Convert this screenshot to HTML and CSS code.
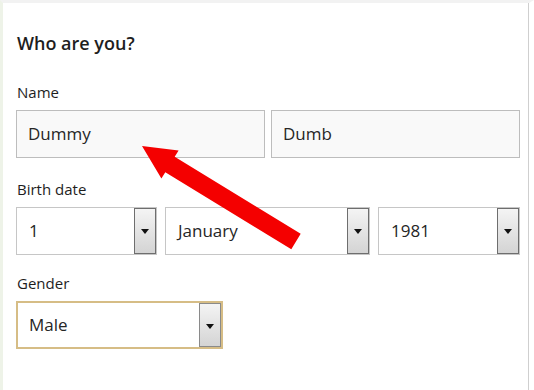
FILE: index.html
```html
<!DOCTYPE html>
<html lang="en">
<head>
  <meta charset="UTF-8">
  <meta name="viewport" content="width=device-width, initial-scale=1.0">
  <title>Who are you?</title>
  <link rel="stylesheet" href="styles.css">
</head>
<body>
  <div class="frame">
    <div class="form-panel">
      <h1>Who are you?</h1>

      <!-- Name -->
      <div class="field name-field">
        <div class="field-label">Name</div>
        <div class="row">
          <div class="text-box name-box">Dummy</div>
          <div class="text-box name-box">Dumb</div>
        </div>
      </div>

      <!-- Birth date -->
      <div class="field">
        <div class="field-label">Birth date</div>
        <div class="row date-row">
          <div class="combo day"><span class="combo-value">1</span><span class="combo-btn"></span></div>
          <div class="combo month"><span class="combo-value">January</span><span class="combo-btn"></span></div>
          <div class="combo year"><span class="combo-value">1981</span><span class="combo-btn"></span></div>
        </div>
      </div>

      <!-- Gender -->
      <div class="field">
        <div class="field-label">Gender</div>
        <div class="row">
          <div class="combo gender focused"><span class="combo-value">Male</span><span class="combo-btn"></span></div>
        </div>
      </div>
    </div>

    <svg class="pointer-arrow" width="534" height="390" viewBox="0 0 534 390">
      <polygon fill="#f40000" points="142,146 178.6,150.4 174.7,156.8 300.7,233.8 291.3,249.2 165.3,172.2 161.4,178.6"/>
    </svg>
  </div>
</body>
</html>
```

FILE: styles.css
```css
body {
  margin: 0;
  background-color: #ffffff;
  font-family: "Open Sans", "Noto Sans", sans-serif;
  color: #1e1e1e;
}

.frame {
  position: relative;
  width: 534px;
  height: 390px;
  box-sizing: border-box;
  border-left: 3px solid #eef3e8;
  border-top: 3px solid #f2f2f2;
  border-right: 5px solid #ffffff;
  overflow: hidden;
}
.frame::after {
  content: '';
  position: absolute;
  top: 0;
  bottom: 0;
  right: 0;
  width: 1px;
  background-color: #cfcfcf;
}

.form-panel {
  padding: 28px 0 0 13px;
}

h1 {
  margin: 0 0 27px 1px;
  font-size: 18px;
  font-weight: 600;
  line-height: 24px;
}

.field {
  margin-bottom: 18px;
}
.name-field {
  margin-bottom: 21px;
}

.field-label {
  font-size: 15px;
  line-height: 20px;
  margin: 0 0 8px 1px;
}

.row {
  display: flex;
  gap: 6px;
}
.date-row {
  gap: 8px;
}

.text-box {
  box-sizing: border-box;
  height: 48px;
  border: 1px solid #bdbdbd;
  background-color: #f9f9f9;
  padding-left: 11px;
  font-size: 17px;
  line-height: 46px;
  color: #262626;
}
.name-box {
  width: 249px;
}

.combo {
  box-sizing: border-box;
  height: 48px;
  border: 1px solid #c6c6c6;
  background-color: #ffffff;
  display: flex;
  align-items: stretch;
  font-size: 17px;
}
.combo-value {
  flex: 1;
  padding-left: 12px;
  line-height: 46px;
  color: #262626;
}
.combo-btn {
  position: relative;
  width: 20px;
  border: 1px solid #6e6e6e;
  background: linear-gradient(#f4f4f4, #d4d4d4);
}
.combo-btn::after {
  content: '';
  position: absolute;
  left: 6px;
  top: 20px;
  border-left: 4px solid transparent;
  border-right: 4px solid transparent;
  border-top: 5px solid #111111;
}

.day { width: 141px; }
.month { width: 205px; }
.year { width: 142px; }
.gender { width: 207px; }

.focused {
  border: 2px solid #d6bd86;
}
.focused .combo-value {
  padding-left: 11px;
  line-height: 44px;
}
.focused .combo-btn {
  border-color: #8a8a8a;
}

.pointer-arrow {
  position: absolute;
  left: -3px;
  top: -3px;
}
```
